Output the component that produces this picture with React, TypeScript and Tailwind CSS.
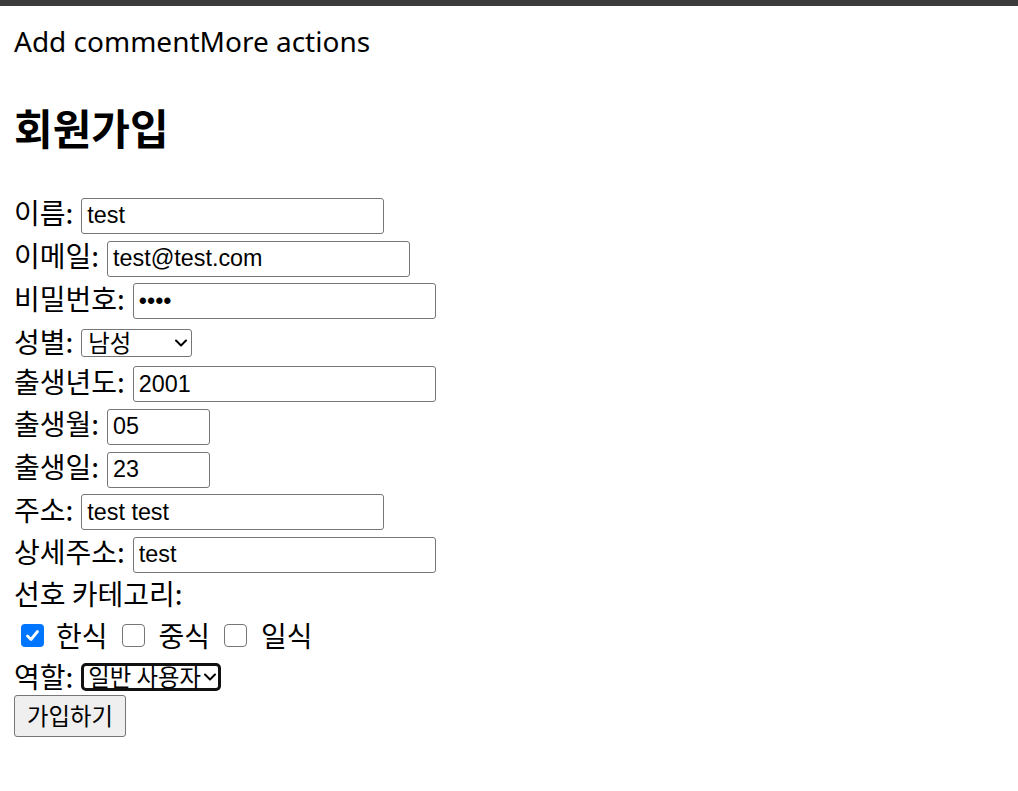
import { useState } from "react";

/* 공통 스타일 */
const labelCls =
	"text-[28px] leading-[28px] font-['Noto_Sans_CJK_KR','Noto_Sans',sans-serif] whitespace-nowrap";
const inputCls =
	"h-[36px] rounded-[3px] border border-[#767676] bg-white px-[5px] text-[23.33px] text-black font-['Liberation_Sans',Arial,sans-serif] outline-none";
const smallKr =
	"text-[23.33px] leading-none font-['Noto_Sans_CJK_KR','Noto_Sans',sans-serif] whitespace-nowrap";

function Chevron() {
	return (
		<svg width="12" height="8" viewBox="0 0 12 8" fill="none">
			<polyline
				points="1,1.5 6,6.5 11,1.5"
				stroke="#000"
				strokeWidth="2"
				strokeLinecap="round"
				strokeLinejoin="round"
			/>
		</svg>
	);
}

function Check({ checked, onClick }: { checked: boolean; onClick: () => void }) {
	if (checked) {
		return (
			<span
				onClick={onClick}
				className="flex h-[23px] w-[23px] shrink-0 items-center justify-center rounded-[4px] bg-[#0075ff]"
			>
				<svg width="17" height="17" viewBox="0 0 17 17" fill="none">
					<polyline
						points="3.5,9 7,12.5 13.5,4.5"
						stroke="#fff"
						strokeWidth="2.8"
						strokeLinecap="round"
						strokeLinejoin="round"
					/>
				</svg>
			</span>
		);
	}
	return (
		<span
			onClick={onClick}
			className="block h-[23px] w-[23px] shrink-0 rounded-[4px] border-[1.5px] border-[#767676] bg-white"
		/>
	);
}

/* select 모양 박스 */
function FakeSelect({ value, boxCls, chevCls }: { value: string; boxCls: string; chevCls: string }) {
	return (
		<div role="combobox" className={`relative flex h-[28px] items-center bg-white ${boxCls}`}>
			<span className={smallKr}>{value}</span>
			<span className={`pointer-events-none absolute ${chevCls}`}>
				<Chevron />
			</span>
		</div>
	);
}

export default function App() {
	const [cats, setCats] = useState({ korean: true, chinese: false, japanese: false });

	return (
		<div className="min-h-screen bg-white text-black">
			<div className="h-[6px] bg-[#3b3b3b]" />
			<div className="px-[14px]">
				<p className="mt-[17px] text-[28px] leading-[36px] font-['Noto_Sans',sans-serif]">
					Add commentMore actions
				</p>
				<h1 className="mt-[47px] mb-[46px] text-[42px] leading-[42px] font-bold font-['Noto_Sans_CJK_KR',sans-serif]">
					회원가입
				</h1>

				<form onSubmit={(e) => e.preventDefault()}>
					{/* 이름 */}
					<div className="flex h-[43px] items-center">
						<label className={`${labelCls} mb-[7px]`}>이름:</label>
						<input defaultValue="test" className={`${inputCls} ml-[8px] w-[303px]`} />
					</div>
					{/* 이메일 */}
					<div className="flex h-[43px] items-center">
						<label className={`${labelCls} mb-[7px]`}>이메일:</label>
						<input defaultValue="test@test.com" className={`${inputCls} ml-[8px] w-[303px]`} />
					</div>
					{/* 비밀번호 */}
					<div className="flex h-[42px] items-center">
						<label className={`${labelCls} mb-[7px]`}>비밀번호:</label>
						<input
							type="password"
							defaultValue="test"
							className={`${inputCls} ml-[8px] w-[303px]`}
						/>
					</div>
					{/* 성별 */}
					<div className="flex h-[41px] items-center">
						<label className={`${labelCls} mb-[4px]`}>성별:</label>
						<div className="ml-[8px]">
							<FakeSelect
								value="남성"
								boxCls="w-[111px] rounded-[3px] border border-[#767676] pl-[6px]"
								chevCls="right-[4px] top-[9px]"
							/>
						</div>
					</div>
					{/* 출생년도 */}
					<div className="flex h-[42px] items-center">
						<label className={`${labelCls} mb-[7px]`}>출생년도:</label>
						<input defaultValue="2001" className={`${inputCls} ml-[8px] w-[303px]`} />
					</div>
					{/* 출생월 */}
					<div className="flex h-[43px] items-center">
						<label className={`${labelCls} mb-[7px]`}>출생월:</label>
						<input defaultValue="05" className={`${inputCls} ml-[8px] w-[103px]`} />
					</div>
					{/* 출생일 */}
					<div className="flex h-[43px] items-center">
						<label className={`${labelCls} mb-[7px]`}>출생일:</label>
						<input defaultValue="23" className={`${inputCls} ml-[8px] w-[103px]`} />
					</div>
					{/* 주소 */}
					<div className="flex h-[42px] items-center">
						<label className={`${labelCls} mb-[7px]`}>주소:</label>
						<input defaultValue="test test" className={`${inputCls} ml-[8px] w-[303px]`} />
					</div>
					{/* 상세주소 */}
					<div className="flex h-[43px] items-center">
						<label className={`${labelCls} mb-[7px]`}>상세주소:</label>
						<input defaultValue="test" className={`${inputCls} ml-[8px] w-[303px]`} />
					</div>

					{/* 선호 카테고리 */}
					<div className="flex h-[36px] items-center">
						<span className={`${labelCls} mb-[2px]`}>선호 카테고리:</span>
					</div>
					<div className="flex h-[46px] items-center">
						<span className="ml-[7px]">
							<Check
								checked={cats.korean}
								onClick={() => setCats({ ...cats, korean: !cats.korean })}
							/>
						</span>
						<span className={`${labelCls} ml-[12px]`}>한식</span>
						<span className="ml-[14px]">
							<Check
								checked={cats.chinese}
								onClick={() => setCats({ ...cats, chinese: !cats.chinese })}
							/>
						</span>
						<span className={`${labelCls} ml-[14px]`}>중식</span>
						<span className="ml-[14px]">
							<Check
								checked={cats.japanese}
								onClick={() => setCats({ ...cats, japanese: !cats.japanese })}
							/>
						</span>
						<span className={`${labelCls} ml-[14px]`}>일식</span>
					</div>

					{/* 역할 */}
					<div className="flex h-[37px] items-center">
						<label className={`${labelCls} mb-[2px]`}>역할:</label>
						<div className="ml-[8px]">
							<FakeSelect
								value="일반 사용자"
								boxCls="w-[140px] rounded-[5px] border-[3px] border-[#111] pl-[4px]"
								chevCls="right-[2px] top-[7px]"
							/>
						</div>
					</div>

					<button
						type="submit"
						className={`${smallKr} h-[42px] w-[112px] rounded-[3px] border border-[#767676] bg-[#efefef] text-black`}
					>
						가입하기
					</button>
				</form>
			</div>
		</div>
	);
}
